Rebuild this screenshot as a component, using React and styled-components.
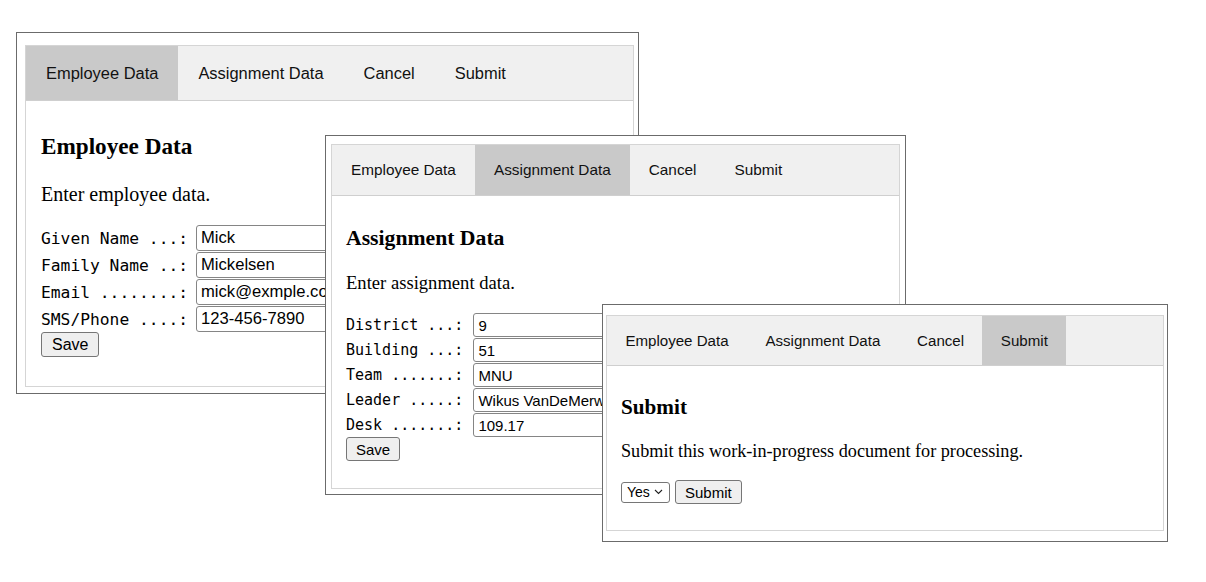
import React from "react";
import styled, { createGlobalStyle, ThemeProvider } from "styled-components";

const GlobalStyle = createGlobalStyle`
  html, body {
    margin: 0;
    padding: 0;
    background: #fff;
  }
  body {
    font-family: "Liberation Sans", Arial, sans-serif;
    color: #000;
  }
`;

// metrics per window: the three screenshots were taken at slightly different zoom
const large = {
  pad: "12px 4px 6px 8px",
  barH: 55,
  tab: 16.45,
  tabPad: 20,
  cPad: 15,
  h: 23.2,
  hLh: 28,
  hTop: 31,
  p: 20,
  pLh: 24,
  pTop: 22,
  blockTop: 19,
  mono: 16.3,
  labelGap: 8,
  inH: 26,
  inF: 16.6,
  inW: 200,
  btnH: 25,
  btnF: 16,
  btnPad: 10,
};

const medium = {
  pad: "8px 5px 5px 5px",
  barH: 51,
  tab: 15.35,
  tabPad: 19,
  cPad: 14,
  h: 21.7,
  hLh: 26,
  hTop: 29,
  p: 18.6,
  pLh: 22,
  pTop: 21,
  blockTop: 19,
  mono: 15,
  labelGap: 10,
  inH: 24,
  inF: 15,
  inW: 200,
  btnH: 24,
  btnF: 15,
  btnPad: 9,
};

const small = {
  pad: "10px 3px 10px 3px",
  barH: 50,
  tab: 15.1,
  tabPad: 18.4,
  cPad: 14,
  h: 21.2,
  hLh: 26,
  hTop: 28,
  p: 18.2,
  pLh: 22,
  pTop: 20,
  blockTop: 18,
  mono: 15,
  labelGap: 6,
  inH: 24,
  inF: 15,
  inW: 200,
  btnH: 24,
  btnF: 15,
  btnPad: 9,
};

const chevron =
  "url(\"data:image/svg+xml,%3Csvg xmlns='http://www.w3.org/2000/svg' width='9' height='6' viewBox='0 0 9 6'%3E%3Cpath d='M1 1l3.5 3.5L8 1' fill='none' stroke='%23222' stroke-width='1.1'/%3E%3C/svg%3E\")";

const Desktop = styled.div`
  position: relative;
  width: 1206px;
  height: 582px;
  overflow: hidden;
  background: #fff;
`;

const Window = styled.div`
  position: absolute;
  left: ${(p) => p.$x}px;
  top: ${(p) => p.$y}px;
  width: ${(p) => p.$w}px;
  height: ${(p) => p.$h}px;
  box-sizing: border-box;
  display: flex;
  padding: ${(p) => p.theme.pad};
  background: #fff;
  border: 1px solid #6b6b6b;
  overflow: hidden;
`;

const Frame = styled.div`
  flex: 1;
  min-width: 0;
  display: flex;
  flex-direction: column;
  border: 1px solid #d5d5d5;
`;

const TabBar = styled.nav`
  display: flex;
  flex: none;
  height: ${(p) => p.theme.barH}px;
  box-sizing: border-box;
  background: #f0f0f0;
  border-bottom: 1px solid #cfcfcf;
`;

const Tab = styled.div`
  display: flex;
  align-items: center;
  padding: 0 ${(p) => p.theme.tabPad}px;
  font-size: ${(p) => p.theme.tab}px;
  color: #111;
  white-space: nowrap;
  background: ${(p) => (p.$active ? "#c9c9c9" : "transparent")};
`;

const Content = styled.section`
  padding: 0 ${(p) => p.theme.cPad}px;
`;

const Heading = styled.h2`
  margin: ${(p) => p.theme.hTop}px 0 0;
  font-family: "Liberation Serif", "Times New Roman", serif;
  font-weight: bold;
  font-size: ${(p) => p.theme.h}px;
  line-height: ${(p) => p.theme.hLh}px;
`;

const Lead = styled.p`
  margin: ${(p) => p.theme.pTop}px 0 0;
  font-family: "Liberation Serif", "Times New Roman", serif;
  font-size: ${(p) => p.theme.p}px;
  line-height: ${(p) => p.theme.pLh}px;
  white-space: nowrap;
`;

const Form = styled.div`
  display: grid;
  grid-template-columns: max-content ${(p) => p.theme.inW}px;
  column-gap: ${(p) => p.theme.labelGap}px;
  row-gap: 1px;
  align-items: center;
  margin-top: ${(p) => p.theme.blockTop}px;
`;

const Label = styled.label`
  font-family: "DejaVu Sans Mono", "Liberation Mono", monospace;
  font-size: ${(p) => p.theme.mono}px;
  white-space: pre;
`;

const Field = styled.input`
  width: 100%;
  height: ${(p) => p.theme.inH}px;
  box-sizing: border-box;
  margin: 0;
  padding: 0 4px;
  border: 1px solid #858585;
  border-radius: 3px;
  background: #fff;
  font-family: "Liberation Sans", Arial, sans-serif;
  font-size: ${(p) => p.theme.inF}px;
  color: #000;
`;

const Button = styled.button`
  height: ${(p) => p.theme.btnH}px;
  box-sizing: border-box;
  margin: 0;
  padding: 0 ${(p) => p.theme.btnPad}px;
  border: 1px solid #767676;
  border-radius: 3px;
  background: #efefef;
  font-family: "Liberation Sans", Arial, sans-serif;
  font-size: ${(p) => p.theme.btnF}px;
  color: #000;
`;

const Actions = styled.div`
  display: flex;
  align-items: center;
  gap: 5px;
  margin-top: ${(p) => p.theme.blockTop}px;
`;

const Select = styled.select`
  appearance: none;
  width: 49px;
  height: 21px;
  box-sizing: border-box;
  margin: 0;
  padding: 0 0 0 5px;
  border: 1px solid #767676;
  border-radius: 3px;
  background: #fff ${chevron} no-repeat right 6px center;
  font-family: "Liberation Sans", Arial, sans-serif;
  font-size: 14px;
  color: #000;
`;

const tabs = ["Employee Data", "Assignment Data", "Cancel", "Submit"];

const employeeFields = [
  ["Given Name ...:", "Mick"],
  ["Family Name ..:", "Mickelsen"],
  ["Email ........:", "mick@exmple.com"],
  ["SMS/Phone ....:", "123-456-7890"],
];

const assignmentFields = [
  ["District ...:", "9"],
  ["Building ...:", "51"],
  ["Team .......:", "MNU"],
  ["Leader .....:", "Wikus VanDeMerwe"],
  ["Desk .......:", "109.17"],
];

const Tabs = ({ active }) => (
  <TabBar>
    {tabs.map((t) => (
      <Tab key={t} $active={t === active}>
        {t}
      </Tab>
    ))}
  </TabBar>
);

const DataForm = ({ fields }) => (
  <>
    <Form>
      {fields.map(([label, value]) => (
        <React.Fragment key={label}>
          <Label>{label}</Label>
          <Field defaultValue={value} />
        </React.Fragment>
      ))}
    </Form>
    <Button>Save</Button>
  </>
);

export default function App() {
  return (
    <Desktop>
      <GlobalStyle />

      <ThemeProvider theme={large}>
        <Window $x={16} $y={32} $w={623} $h={362}>
          <Frame>
            <Tabs active="Employee Data" />
            <Content>
              <Heading>Employee Data</Heading>
              <Lead>Enter employee data.</Lead>
              <DataForm fields={employeeFields} />
            </Content>
          </Frame>
        </Window>
      </ThemeProvider>

      <ThemeProvider theme={medium}>
        <Window $x={325} $y={135} $w={581} $h={360}>
          <Frame>
            <Tabs active="Assignment Data" />
            <Content>
              <Heading>Assignment Data</Heading>
              <Lead>Enter assignment data.</Lead>
              <DataForm fields={assignmentFields} />
            </Content>
          </Frame>
        </Window>
      </ThemeProvider>

      <ThemeProvider theme={small}>
        <Window $x={602} $y={304} $w={566} $h={238}>
          <Frame>
            <Tabs active="Submit" />
            <Content>
              <Heading>Submit</Heading>
              <Lead>Submit this work-in-progress document for processing.</Lead>
              <Actions>
                <Select defaultValue="Yes">
                  <option>Yes</option>
                  <option>No</option>
                </Select>
                <Button>Submit</Button>
              </Actions>
            </Content>
          </Frame>
        </Window>
      </ThemeProvider>
    </Desktop>
  );
}
